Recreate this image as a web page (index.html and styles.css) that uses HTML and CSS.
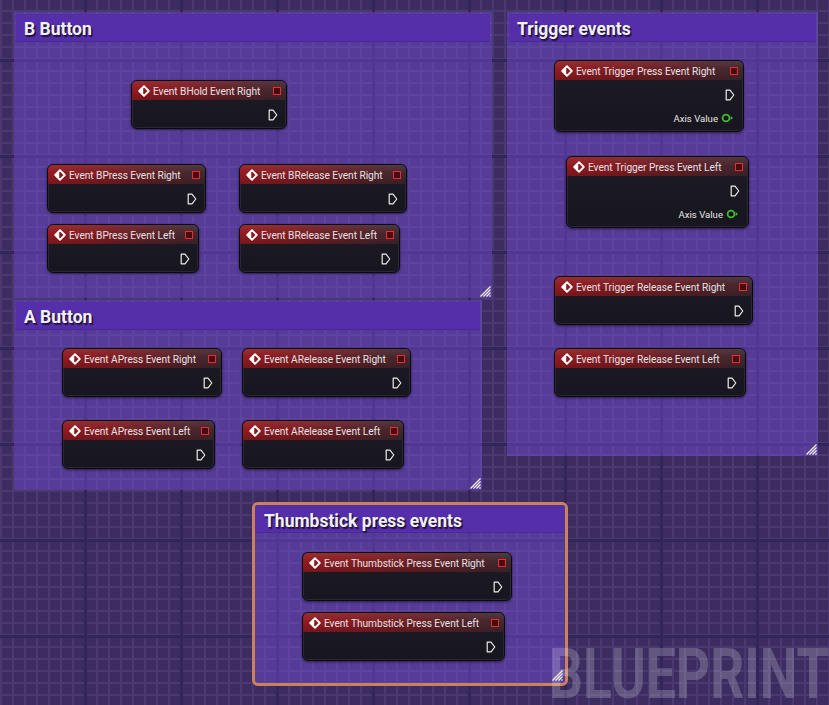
FILE: index.html
```html
<!DOCTYPE html>
<html lang="en">
<head>
<meta charset="utf-8">
<title>Blueprint</title>
<link rel="stylesheet" href="styles.css">
</head>
<body>
<div class="canvas">

  <section class="comment c-b">
    <header class="comment-head"><h2 class="comment-title">B Button</h2></header>
    <svg class="resize" viewBox="0 0 11 11" width="11" height="11"><path d="M10.5 0.5 L0.5 10.5 M10.5 3.5 L3.5 10.5 M10.5 6.5 L6.5 10.5 M10.5 9.5 L9.5 10.5" stroke="#fff" stroke-width="1.1"/></svg>
  </section>

  <section class="comment c-a">
    <header class="comment-head"><h2 class="comment-title">A Button</h2></header>
    <svg class="resize" viewBox="0 0 11 11" width="11" height="11"><path d="M10.5 0.5 L0.5 10.5 M10.5 3.5 L3.5 10.5 M10.5 6.5 L6.5 10.5 M10.5 9.5 L9.5 10.5" stroke="#fff" stroke-width="1.1"/></svg>
  </section>

  <section class="comment c-trig">
    <header class="comment-head"><h2 class="comment-title">Trigger events</h2></header>
    <svg class="resize" viewBox="0 0 11 11" width="11" height="11"><path d="M10.5 0.5 L0.5 10.5 M10.5 3.5 L3.5 10.5 M10.5 6.5 L6.5 10.5 M10.5 9.5 L9.5 10.5" stroke="#fff" stroke-width="1.1"/></svg>
  </section>

  <section class="comment c-thumb selected">
    <header class="comment-head"><h2 class="comment-title">Thumbstick press events</h2></header>
    <svg class="resize" viewBox="0 0 11 11" width="11" height="11"><path d="M10.5 0.5 L0.5 10.5 M10.5 3.5 L3.5 10.5 M10.5 6.5 L6.5 10.5 M10.5 9.5 L9.5 10.5" stroke="#fff" stroke-width="1.1"/></svg>
  </section>

  <!-- B Button nodes -->
  <div class="node n1">
    <div class="node-head"><svg class="ev" viewBox="0 0 12 12" width="12" height="12"><path d="M6 1.2 L10.8 6 L6 10.8 L1.2 6 Z" fill="none" stroke="#fff" stroke-width="1.8" stroke-linejoin="round"/><path d="M1.5 6 L5.2 2.4 V9.6 Z" fill="#fff"/></svg><span class="node-title">Event BHold Event Right</span><span class="pin-del"></span></div>
    <div class="node-body"><div class="row"><svg class="exec" viewBox="0 0 10 12" width="10" height="12"><path d="M1.2 1.2 H5 L8.8 6 L5 10.8 H1.2 Z" fill="none" stroke="#ececec" stroke-width="1.2" stroke-linejoin="round"/></svg></div></div>
  </div>

  <div class="node n2">
    <div class="node-head"><svg class="ev" viewBox="0 0 12 12" width="12" height="12"><path d="M6 1.2 L10.8 6 L6 10.8 L1.2 6 Z" fill="none" stroke="#fff" stroke-width="1.8" stroke-linejoin="round"/><path d="M1.5 6 L5.2 2.4 V9.6 Z" fill="#fff"/></svg><span class="node-title">Event BPress Event Right</span><span class="pin-del"></span></div>
    <div class="node-body"><div class="row"><svg class="exec" viewBox="0 0 10 12" width="10" height="12"><path d="M1.2 1.2 H5 L8.8 6 L5 10.8 H1.2 Z" fill="none" stroke="#ececec" stroke-width="1.2" stroke-linejoin="round"/></svg></div></div>
  </div>

  <div class="node n3">
    <div class="node-head"><svg class="ev" viewBox="0 0 12 12" width="12" height="12"><path d="M6 1.2 L10.8 6 L6 10.8 L1.2 6 Z" fill="none" stroke="#fff" stroke-width="1.8" stroke-linejoin="round"/><path d="M1.5 6 L5.2 2.4 V9.6 Z" fill="#fff"/></svg><span class="node-title">Event BRelease Event Right</span><span class="pin-del"></span></div>
    <div class="node-body"><div class="row"><svg class="exec" viewBox="0 0 10 12" width="10" height="12"><path d="M1.2 1.2 H5 L8.8 6 L5 10.8 H1.2 Z" fill="none" stroke="#ececec" stroke-width="1.2" stroke-linejoin="round"/></svg></div></div>
  </div>

  <div class="node n4">
    <div class="node-head"><svg class="ev" viewBox="0 0 12 12" width="12" height="12"><path d="M6 1.2 L10.8 6 L6 10.8 L1.2 6 Z" fill="none" stroke="#fff" stroke-width="1.8" stroke-linejoin="round"/><path d="M1.5 6 L5.2 2.4 V9.6 Z" fill="#fff"/></svg><span class="node-title">Event BPress Event Left</span><span class="pin-del"></span></div>
    <div class="node-body"><div class="row"><svg class="exec" viewBox="0 0 10 12" width="10" height="12"><path d="M1.2 1.2 H5 L8.8 6 L5 10.8 H1.2 Z" fill="none" stroke="#ececec" stroke-width="1.2" stroke-linejoin="round"/></svg></div></div>
  </div>

  <div class="node n5">
    <div class="node-head"><svg class="ev" viewBox="0 0 12 12" width="12" height="12"><path d="M6 1.2 L10.8 6 L6 10.8 L1.2 6 Z" fill="none" stroke="#fff" stroke-width="1.8" stroke-linejoin="round"/><path d="M1.5 6 L5.2 2.4 V9.6 Z" fill="#fff"/></svg><span class="node-title">Event BRelease Event Left</span><span class="pin-del"></span></div>
    <div class="node-body"><div class="row"><svg class="exec" viewBox="0 0 10 12" width="10" height="12"><path d="M1.2 1.2 H5 L8.8 6 L5 10.8 H1.2 Z" fill="none" stroke="#ececec" stroke-width="1.2" stroke-linejoin="round"/></svg></div></div>
  </div>

  <!-- A Button nodes -->
  <div class="node n6">
    <div class="node-head"><svg class="ev" viewBox="0 0 12 12" width="12" height="12"><path d="M6 1.2 L10.8 6 L6 10.8 L1.2 6 Z" fill="none" stroke="#fff" stroke-width="1.8" stroke-linejoin="round"/><path d="M1.5 6 L5.2 2.4 V9.6 Z" fill="#fff"/></svg><span class="node-title">Event APress Event Right</span><span class="pin-del"></span></div>
    <div class="node-body"><div class="row"><svg class="exec" viewBox="0 0 10 12" width="10" height="12"><path d="M1.2 1.2 H5 L8.8 6 L5 10.8 H1.2 Z" fill="none" stroke="#ececec" stroke-width="1.2" stroke-linejoin="round"/></svg></div></div>
  </div>

  <div class="node n7">
    <div class="node-head"><svg class="ev" viewBox="0 0 12 12" width="12" height="12"><path d="M6 1.2 L10.8 6 L6 10.8 L1.2 6 Z" fill="none" stroke="#fff" stroke-width="1.8" stroke-linejoin="round"/><path d="M1.5 6 L5.2 2.4 V9.6 Z" fill="#fff"/></svg><span class="node-title">Event ARelease Event Right</span><span class="pin-del"></span></div>
    <div class="node-body"><div class="row"><svg class="exec" viewBox="0 0 10 12" width="10" height="12"><path d="M1.2 1.2 H5 L8.8 6 L5 10.8 H1.2 Z" fill="none" stroke="#ececec" stroke-width="1.2" stroke-linejoin="round"/></svg></div></div>
  </div>

  <div class="node n8">
    <div class="node-head"><svg class="ev" viewBox="0 0 12 12" width="12" height="12"><path d="M6 1.2 L10.8 6 L6 10.8 L1.2 6 Z" fill="none" stroke="#fff" stroke-width="1.8" stroke-linejoin="round"/><path d="M1.5 6 L5.2 2.4 V9.6 Z" fill="#fff"/></svg><span class="node-title">Event APress Event Left</span><span class="pin-del"></span></div>
    <div class="node-body"><div class="row"><svg class="exec" viewBox="0 0 10 12" width="10" height="12"><path d="M1.2 1.2 H5 L8.8 6 L5 10.8 H1.2 Z" fill="none" stroke="#ececec" stroke-width="1.2" stroke-linejoin="round"/></svg></div></div>
  </div>

  <div class="node n9">
    <div class="node-head"><svg class="ev" viewBox="0 0 12 12" width="12" height="12"><path d="M6 1.2 L10.8 6 L6 10.8 L1.2 6 Z" fill="none" stroke="#fff" stroke-width="1.8" stroke-linejoin="round"/><path d="M1.5 6 L5.2 2.4 V9.6 Z" fill="#fff"/></svg><span class="node-title">Event ARelease Event Left</span><span class="pin-del"></span></div>
    <div class="node-body"><div class="row"><svg class="exec" viewBox="0 0 10 12" width="10" height="12"><path d="M1.2 1.2 H5 L8.8 6 L5 10.8 H1.2 Z" fill="none" stroke="#ececec" stroke-width="1.2" stroke-linejoin="round"/></svg></div></div>
  </div>

  <!-- Trigger nodes -->
  <div class="node n10">
    <div class="node-head"><svg class="ev" viewBox="0 0 12 12" width="12" height="12"><path d="M6 1.2 L10.8 6 L6 10.8 L1.2 6 Z" fill="none" stroke="#fff" stroke-width="1.8" stroke-linejoin="round"/><path d="M1.5 6 L5.2 2.4 V9.6 Z" fill="#fff"/></svg><span class="node-title">Event Trigger Press Event Right</span><span class="pin-del"></span></div>
    <div class="node-body">
      <div class="row"><svg class="exec" viewBox="0 0 10 12" width="10" height="12"><path d="M1.2 1.2 H5 L8.8 6 L5 10.8 H1.2 Z" fill="none" stroke="#ececec" stroke-width="1.2" stroke-linejoin="round"/></svg></div>
      <div class="row"><span class="pin-label">Axis Value</span><svg class="axis" viewBox="0 0 13 10" width="13" height="10"><circle cx="5" cy="5" r="3.4" fill="#15151b" stroke="#3dbd2f" stroke-width="1.8"/><path d="M9.6 3 L12 5 L9.6 7 Z" fill="#3dbd2f"/></svg></div>
    </div>
  </div>

  <div class="node n11">
    <div class="node-head"><svg class="ev" viewBox="0 0 12 12" width="12" height="12"><path d="M6 1.2 L10.8 6 L6 10.8 L1.2 6 Z" fill="none" stroke="#fff" stroke-width="1.8" stroke-linejoin="round"/><path d="M1.5 6 L5.2 2.4 V9.6 Z" fill="#fff"/></svg><span class="node-title">Event Trigger Press Event Left</span><span class="pin-del"></span></div>
    <div class="node-body">
      <div class="row"><svg class="exec" viewBox="0 0 10 12" width="10" height="12"><path d="M1.2 1.2 H5 L8.8 6 L5 10.8 H1.2 Z" fill="none" stroke="#ececec" stroke-width="1.2" stroke-linejoin="round"/></svg></div>
      <div class="row"><span class="pin-label">Axis Value</span><svg class="axis" viewBox="0 0 13 10" width="13" height="10"><circle cx="5" cy="5" r="3.4" fill="#15151b" stroke="#3dbd2f" stroke-width="1.8"/><path d="M9.6 3 L12 5 L9.6 7 Z" fill="#3dbd2f"/></svg></div>
    </div>
  </div>

  <div class="node n12">
    <div class="node-head"><svg class="ev" viewBox="0 0 12 12" width="12" height="12"><path d="M6 1.2 L10.8 6 L6 10.8 L1.2 6 Z" fill="none" stroke="#fff" stroke-width="1.8" stroke-linejoin="round"/><path d="M1.5 6 L5.2 2.4 V9.6 Z" fill="#fff"/></svg><span class="node-title">Event Trigger Release Event Right</span><span class="pin-del"></span></div>
    <div class="node-body"><div class="row"><svg class="exec" viewBox="0 0 10 12" width="10" height="12"><path d="M1.2 1.2 H5 L8.8 6 L5 10.8 H1.2 Z" fill="none" stroke="#ececec" stroke-width="1.2" stroke-linejoin="round"/></svg></div></div>
  </div>

  <div class="node n13">
    <div class="node-head"><svg class="ev" viewBox="0 0 12 12" width="12" height="12"><path d="M6 1.2 L10.8 6 L6 10.8 L1.2 6 Z" fill="none" stroke="#fff" stroke-width="1.8" stroke-linejoin="round"/><path d="M1.5 6 L5.2 2.4 V9.6 Z" fill="#fff"/></svg><span class="node-title">Event Trigger Release Event Left</span><span class="pin-del"></span></div>
    <div class="node-body"><div class="row"><svg class="exec" viewBox="0 0 10 12" width="10" height="12"><path d="M1.2 1.2 H5 L8.8 6 L5 10.8 H1.2 Z" fill="none" stroke="#ececec" stroke-width="1.2" stroke-linejoin="round"/></svg></div></div>
  </div>

  <!-- Thumbstick nodes -->
  <div class="node n14">
    <div class="node-head"><svg class="ev" viewBox="0 0 12 12" width="12" height="12"><path d="M6 1.2 L10.8 6 L6 10.8 L1.2 6 Z" fill="none" stroke="#fff" stroke-width="1.8" stroke-linejoin="round"/><path d="M1.5 6 L5.2 2.4 V9.6 Z" fill="#fff"/></svg><span class="node-title">Event Thumbstick Press Event Right</span><span class="pin-del"></span></div>
    <div class="node-body"><div class="row"><svg class="exec" viewBox="0 0 10 12" width="10" height="12"><path d="M1.2 1.2 H5 L8.8 6 L5 10.8 H1.2 Z" fill="none" stroke="#ececec" stroke-width="1.2" stroke-linejoin="round"/></svg></div></div>
  </div>

  <div class="node n15">
    <div class="node-head"><svg class="ev" viewBox="0 0 12 12" width="12" height="12"><path d="M6 1.2 L10.8 6 L6 10.8 L1.2 6 Z" fill="none" stroke="#fff" stroke-width="1.8" stroke-linejoin="round"/><path d="M1.5 6 L5.2 2.4 V9.6 Z" fill="#fff"/></svg><span class="node-title">Event Thumbstick Press Event Left</span><span class="pin-del"></span></div>
    <div class="node-body"><div class="row"><svg class="exec" viewBox="0 0 10 12" width="10" height="12"><path d="M1.2 1.2 H5 L8.8 6 L5 10.8 H1.2 Z" fill="none" stroke="#ececec" stroke-width="1.2" stroke-linejoin="round"/></svg></div></div>
  </div>

  <div class="watermark">BLUEPRINT</div>
</div>
</body>
</html>
```
FILE: styles.css
```css
* { box-sizing: border-box; }

html, body {
  margin: 0;
  padding: 0;
}

body {
  width: 829px;
  height: 705px;
  overflow: hidden;
  font-family: Roboto, "Noto Sans", sans-serif;
}

.canvas {
  position: relative;
  width: 829px;
  height: 705px;
  overflow: hidden;
  background-color: #3d2c60;
  background-image:
    linear-gradient(90deg, #33245a 0 3px, transparent 3px),
    linear-gradient(180deg, #33245a 0 3px, transparent 3px),
    linear-gradient(90deg, #4a3971 0 2px, transparent 2px),
    linear-gradient(180deg, #4a3971 0 2px, transparent 2px);
  background-size: 96px 100%, 100% 96px, 12px 100%, 100% 12px;
  background-position: 84px 0, 0 59px, 0 0, 0 10px;
}

/* ---------- comment boxes ---------- */
.comment {
  position: absolute;
  padding: 2px;
  display: flex;
  flex-direction: column;
  background: rgba(125, 85, 235, 0.4);
}

.comment-head {
  height: 28px;
  display: flex;
  align-items: center;
  padding: 3px 0 0 8px;
  background: #552ea9;
  border-bottom: 1px solid #4a279a;
}

.comment-title {
  margin: 0;
  font-family: Roboto, "Noto Sans", sans-serif;
  font-weight: 700;
  font-size: 17.5px;
  color: #f2f0f6;
  text-shadow: 1px 1px 0 #221440, 1.5px 1.5px 1px #221440;
  white-space: nowrap;
}

.resize {
  position: absolute;
  right: 1px;
  bottom: 1px;
}

.c-b { left: 14px; top: 12px; width: 478px; height: 286px; }
.c-a { left: 14px; top: 300px; width: 468px; height: 190px; }
.c-trig { left: 507px; top: 12px; width: 311px; height: 444px; }

.c-thumb {
  left: 252px;
  top: 502px;
  width: 316px;
  height: 184px;
}

.comment.selected {
  padding: 0;
  border: 3px solid #c9825b;
  border-radius: 6px;
}

.comment.selected .comment-head {
  padding: 4px 0 0 9px;
  border-radius: 3px 3px 0 0;
}

.comment.selected .resize {
  right: 2px;
  bottom: 2px;
}

/* ---------- nodes ---------- */
.node {
  position: absolute;
  display: flex;
  flex-direction: column;
  border-radius: 6px;
  background: linear-gradient(180deg, #1d1c26 0%, #17161f 100%);
  border: 1px solid #0b0a10;
  box-shadow: inset 0 0 0 1px #2a2933, 0 1px 3px rgba(0, 0, 0, 0.55);
  overflow: hidden;
}

.node-head {
  height: 19px;
  display: flex;
  align-items: center;
  gap: 3px;
  padding: 1px 5px 0 6px;
  background:
    linear-gradient(180deg, rgba(255, 255, 255, 0.08) 0%, rgba(255, 255, 255, 0) 45%, rgba(0, 0, 0, 0.18) 100%),
    linear-gradient(90deg, #931b20 0%, #7f1d22 35%, #5a2228 70%, #3e2930 100%);
}

.ev { flex: none; }

.node-title {
  flex: 1;
  font-size: 10.2px;
  color: #e4e2e6;
  white-space: nowrap;
  letter-spacing: -0.05px;
}

.pin-del {
  flex: none;
  width: 8px;
  height: 8px;
  border: 1.6px solid #ee2a2e;
  background: #4a0a0e;
  margin-left: 6px;
}

.node-body {
  display: flex;
  flex-direction: column;
  gap: 7px;
  padding: 7px 8px 5px;
}

.row {
  height: 16px;
  display: flex;
  align-items: center;
  justify-content: flex-end;
  gap: 3px;
}

.pin-label {
  font-size: 9.6px;
  color: #e6e4e8;
}

.axis { flex: none; margin-right: 1px; }
.exec { flex: none; }

.n1 { left: 131px; top: 80px; width: 156px; }
.n2 { left: 47px; top: 164px; width: 159px; }
.n3 { left: 239px; top: 164px; width: 168px; }
.n4 { left: 47px; top: 224px; width: 152px; }
.n5 { left: 239px; top: 224px; width: 161px; }
.n6 { left: 62px; top: 348px; width: 160px; }
.n7 { left: 242px; top: 348px; width: 169px; }
.n8 { left: 62px; top: 420px; width: 153px; }
.n9 { left: 242px; top: 420px; width: 162px; }
.n10 { left: 554px; top: 60px; width: 190px; }
.n11 { left: 566px; top: 156px; width: 183px; }
.n12 { left: 554px; top: 276px; width: 199px; }
.n13 { left: 554px; top: 348px; width: 192px; }
.n14 { left: 302px; top: 552px; width: 210px; }
.n15 { left: 302px; top: 612px; width: 203px; }

/* ---------- watermark ---------- */
.watermark {
  position: absolute;
  left: 549px;
  top: 639px;
  font-family: Roboto, "Noto Sans", sans-serif;
  font-weight: 700;
  font-size: 70px;
  line-height: 1;
  color: rgba(255, 255, 255, 0.2);
  white-space: nowrap;
  transform: scaleX(0.76);
  transform-origin: 0 0;
  pointer-events: none;
}
```
